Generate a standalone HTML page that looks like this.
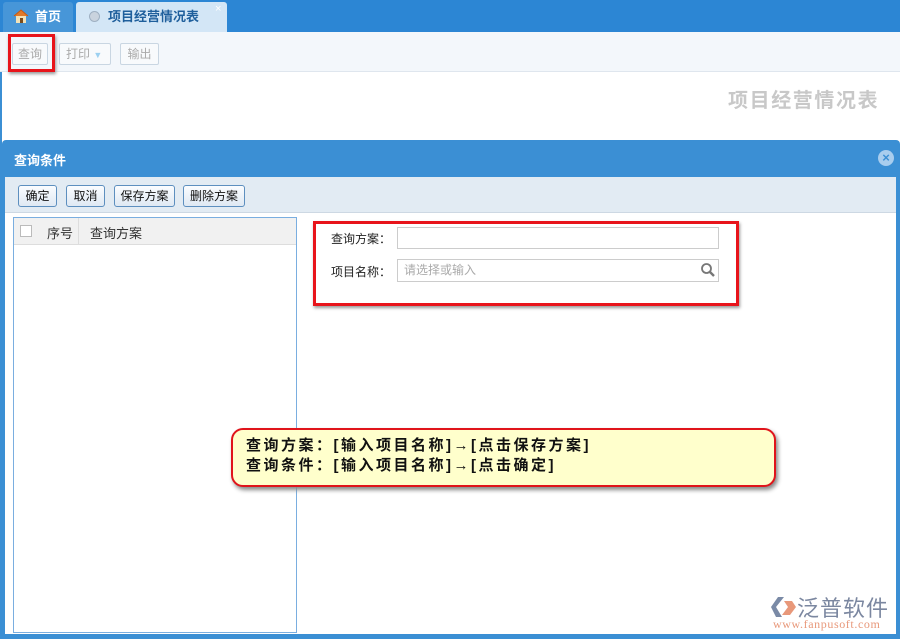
<!DOCTYPE html>
<html><head><meta charset="utf-8"><style>
*{margin:0;padding:0;box-sizing:border-box}
body{width:900px;height:639px;position:relative;overflow:hidden;background:#fff;font-family:"Liberation Sans","Noto Sans CJK SC",sans-serif;font-size:12px;color:#222}
.abs{position:absolute}
.btn{position:absolute;border:1px solid #5d8fbf;border-radius:3px;background:linear-gradient(#fbfdff,#dfe9f3);font-size:12px;line-height:20px;text-align:center;height:22px;color:#111}
.gbtn{position:absolute;border:1px solid #c9d6e2;border-radius:2px;background:#f8fafc;color:#aaa;font-size:12px;line-height:20px;text-align:center;height:22px}
</style></head><body>
<div class="abs" style="left:0;top:0;width:900px;height:32px;background:#2c86d4"></div>
<div class="abs" style="left:3px;top:2px;width:70px;height:30px;background:#4796d8;border-radius:3px 3px 0 0;color:#fff;font-weight:bold;font-size:13px;line-height:30px;padding-left:32px">首页</div>
<svg class="abs" style="left:13px;top:9px" width="16" height="14" viewBox="0 0 16 14"><path d="M1 7L8 1L15 7" fill="#e07a2a" stroke="#c85a10"/><rect x="3" y="7" width="10" height="7" fill="#f2e2b8"/><rect x="7" y="9" width="3" height="5" fill="#7a4a1a"/></svg>
<div class="abs" style="left:76px;top:2px;width:151px;height:30px;background:#d3e6f6;border-radius:3px 3px 0 0;color:#1f5f9c;font-weight:bold;font-size:13px;line-height:30px;padding-left:32px">项目经营情况表</div>
<div class="abs" style="left:89px;top:11px;width:11px;height:11px;border-radius:50%;background:#c9d3de;border:1px solid #9fb0c2"></div>
<div class="abs" style="left:215px;top:3px;color:#fff;font-size:11px">×</div>
<div class="abs" style="left:0;top:32px;width:900px;height:40px;background:#f3f7fb;border-bottom:1px solid #dfe6ee"></div>
<div class="gbtn" style="left:12px;top:43px;width:36px">查询</div>
<div class="gbtn" style="left:59px;top:43px;width:52px;text-align:left;padding-left:6px">打印 <span style="color:#9cd0f0;font-size:9px">▼</span></div>
<div class="gbtn" style="left:120px;top:43px;width:39px">输出</div>
<div class="abs" style="left:8px;top:34px;width:47px;height:38px;border:3px solid #e8141b;box-shadow:1px 2px 3px #999"></div>
<div class="abs" style="left:728px;top:84px;font-size:20px;font-weight:bold;color:#c8c8c8;letter-spacing:1.6px">项目经营情况表</div>
<div class="abs" style="left:0;top:72px;width:2px;height:567px;background:#3b8fd4"></div>
<div class="abs" style="left:2px;top:140px;width:898px;height:499px;background:#3b8fd4;border-radius:4px 4px 0 0"></div>
<div class="abs" style="left:14px;top:150px;color:#fff;font-weight:bold;font-size:13px">查询条件</div>
<div class="abs" style="left:878px;top:150px;width:16px;height:16px;border-radius:50%;background:#a8cdee;color:#3b8fd4;font-size:13px;line-height:16px;text-align:center;font-weight:bold">×</div>
<div class="abs" style="left:5px;top:177px;width:891px;height:457px;background:#fff"></div>
<div class="abs" style="left:5px;top:177px;width:891px;height:36px;background:#e2ebf3;border-bottom:1px solid #cdd8e3"></div>
<div class="btn" style="left:18px;top:185px;width:39px">确定</div>
<div class="btn" style="left:66px;top:185px;width:39px">取消</div>
<div class="btn" style="left:114px;top:185px;width:61px">保存方案</div>
<div class="btn" style="left:183px;top:185px;width:62px">删除方案</div>
<div class="abs" style="left:13px;top:217px;width:284px;height:416px;border:1px solid #7aaee0;background:#fff"></div>
<div class="abs" style="left:14px;top:218px;width:282px;height:27px;background:#f1f1f1;border-bottom:1px solid #ddd"></div>
<div class="abs" style="left:78px;top:218px;width:1px;height:27px;background:#ddd"></div>
<div class="abs" style="left:20px;top:225px;width:12px;height:12px;border:1px solid #bbb;background:#fff"></div>
<div class="abs" style="left:47px;top:223px;font-size:13px;color:#333">序号</div>
<div class="abs" style="left:90px;top:223px;font-size:13px;color:#333">查询方案</div>
<div class="abs" style="left:331px;top:230px;font-size:12px">查询方案：</div>
<div class="abs" style="left:397px;top:227px;width:322px;height:22px;border:1px solid #ccc"></div>
<div class="abs" style="left:331px;top:263px;font-size:12px">项目名称：</div>
<div class="abs" style="left:397px;top:259px;width:322px;height:23px;border:1px solid #ccc;color:#aaa;padding-left:6px;line-height:21px">请选择或输入</div>
<svg class="abs" style="left:700px;top:262px" width="16" height="16" viewBox="0 0 16 16"><circle cx="6.5" cy="6.5" r="4.5" fill="none" stroke="#777" stroke-width="1.8"/><path d="M10 10L14 14" stroke="#777" stroke-width="2.4"/></svg>
<div class="abs" style="left:313px;top:221px;width:426px;height:85px;border:3px solid #e8141b;box-shadow:1px 2px 3px #999"></div>
<div class="abs" style="left:231px;top:428px;width:545px;height:59px;border:2px solid #e0141b;border-radius:12px;background:#ffffcc;box-shadow:2px 3px 4px #888;padding:6px 0 0 13px;font-size:15px;line-height:20px;color:#111;font-weight:bold;letter-spacing:2.5px;white-space:nowrap">查询方案：[输入项目名称]→[点击保存方案]<br>查询条件：[输入项目名称]→[点击确定]</div>
<svg class="abs" style="left:770px;top:595px" width="28" height="24" viewBox="0 0 28 24"><path d="M8 2L14 2L6 12L12 22L6 22L1 12Z" fill="#7a8aa6"/><path d="M14 6L22 6L26 12L20 20L12 20L18 12Z" fill="#e8987a"/></svg>
<div class="abs" style="left:797px;top:591px;font-size:22px;color:#7b87a0;letter-spacing:1px">泛普软件</div>
<div class="abs" style="left:773px;top:617px;font-size:12px;color:#e8987a;font-family:'Liberation Serif',serif;letter-spacing:0.6px">www.fanpusoft.com</div>
</body></html>
